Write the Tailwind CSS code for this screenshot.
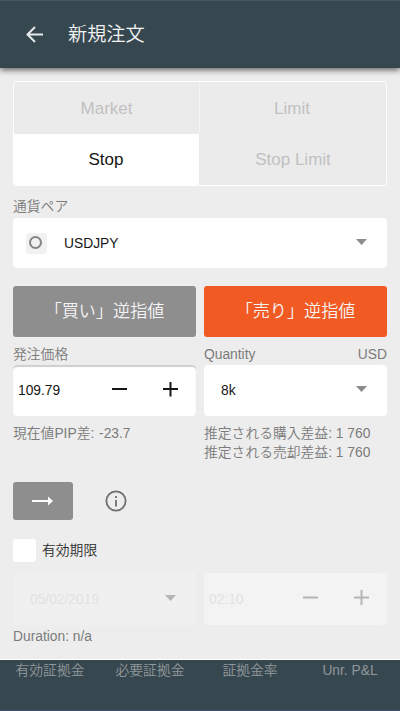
<!DOCTYPE html>
<html lang="ja">
<head>
<meta charset="utf-8">
<title>新規注文</title>
<script src="https://cdn.jsdelivr.net/npm/@tailwindcss/browser@4"></script>
</head>
<body class="w-[400px] h-[711px] overflow-hidden flex flex-col bg-[#ededed] text-[13.8px] leading-[19px] text-[#7b7b7b] font-['Liberation_Sans','Noto_Sans_CJK_JP',sans-serif]">
  <header class="h-[68px] shrink-0 flex items-center bg-[#37474f] border-t border-[#455660] shadow-[0_2px_6px_rgba(0,0,0,0.6)] pl-[26px] text-[#f2f4f5]">
    <svg class="w-[17px] h-[17px]" viewBox="0 0 17 17" fill="none" stroke="#e6e9ea" stroke-width="2"><path d="M17 8.5H1.5M9 1L1.5 8.5L9 16"/></svg>
    <h1 class="ml-[25px] text-[19.2px] leading-[28px] font-[350]">新規注文</h1>
  </header>

  <main class="flex-1 px-[13px] pt-[13px]">
    <div class="h-[105px] grid grid-cols-2 grid-rows-2 rounded-[4px] border border-white bg-[#ebebeb] text-[17px] text-[#c1c1c1] overflow-hidden">
      <div class="flex items-center justify-center pt-[2px] border-r border-[#f3f3f3]">Market</div>
      <div class="flex items-center justify-center pt-[2px] pr-[2px]">Limit</div>
      <div class="flex items-center justify-center bg-white text-[#161616] pr-px mr-px">Stop</div>
      <div class="flex items-center justify-center">Stop Limit</div>
    </div>

    <div class="mt-[10px] h-[22px] leading-[21px] font-[350]">通貨ペア</div>
    <div class="h-[50px] rounded-[4px] bg-white flex items-center pl-[13px] pr-[20px] text-[#161616]">
      <div class="size-[21px] rounded-[3px] bg-[#f0f1f1] flex items-center justify-center"><div class="relative -top-px -left-px size-[13px] rounded-full border-2 border-[#858585]"></div></div>
      <span class="ml-[17px] flex-1">USDJPY</span>
      <svg class="w-[11px] h-[6px] mb-[2px]" viewBox="0 0 11 6"><path d="M0 0H11L5.5 6Z" fill="#8c8c8c"/></svg>
    </div>

    <div class="mt-[18px] h-[51px] flex gap-[8px] text-[17.1px] text-[#f4f4f4] font-[350]">
      <div class="w-[183px] rounded-[3px] bg-[#8e8e8e] flex items-center justify-center">「買い」逆指値</div>
      <div class="w-[183px] rounded-[3px] bg-[#f15a22] flex items-center justify-center">「売り」逆指値</div>
    </div>

    <div class="mt-[7px] h-[21px] flex gap-[8px] leading-[21px]">
      <div class="w-[183px] font-[350]">発注価格</div>
      <div class="w-[183px] flex justify-between"><span>Quantity</span><span>USD</span></div>
    </div>
    <div class="h-[51px] flex gap-[8px] text-[#161616]">
      <div class="w-[183px] rounded-[4px] bg-white shadow-[inset_0_2px_1px_#cfcfcf] flex items-center pl-[5px] pr-[18px]">
        <span class="flex-1">109.79</span>
        <svg class="size-[15px] mb-[2px]" viewBox="0 0 15 15"><path d="M0 7H15" stroke="#161616" stroke-width="2"/></svg>
        <svg class="ml-[36px] mb-[2px] size-[15px]" viewBox="0 0 15 15"><path d="M0 7H15M7.5 -0.5V14.5" stroke="#161616" stroke-width="2"/></svg>
      </div>
      <div class="w-[183px] rounded-[4px] bg-white flex items-center pl-[17px] pr-[20px]">
        <span class="flex-1">8k</span>
        <svg class="w-[11px] h-[6px] mb-[3px]" viewBox="0 0 11 6"><path d="M0 0H11L5.5 6Z" fill="#8c8c8c"/></svg>
      </div>
    </div>

    <div class="mt-[8px] h-[38px] flex gap-[8px] font-[350]">
      <div class="w-[183px]">現在値PIP差: <span class="ml-px">-23.7</span></div>
      <div class="w-[183px] whitespace-nowrap">推定される購入差益: 1 760<br>推定される売却差益: 1 760</div>
    </div>

    <div class="mt-[20px] h-[38px] flex items-center">
      <div class="w-[60px] h-[38px] rounded-[3px] bg-[#8e8e8e] flex items-center justify-center">
        <svg class="w-[21px] h-[10px] mr-[2px] mb-px" viewBox="0 0 21 10"><path d="M0 5H17" stroke="#fff" stroke-width="2"/><path d="M16 0.5L21 5L16 9.5Z" fill="#fff"/></svg>
      </div>
      <svg class="ml-[32px] mb-px size-[22px]" viewBox="0 0 22 22" fill="none" stroke="#6e6e6e" stroke-width="1.8"><circle cx="11" cy="11" r="9.6"/><path d="M11 10V16.5M11 6V8"/></svg>
    </div>

    <div class="mt-[18px] h-[25px] flex items-center text-[#2b2b2b]">
      <div class="size-[23px] rounded-[3px] bg-white"></div>
      <span class="ml-[6px] mb-px font-[350]">有効期限</span>
    </div>

    <div class="mt-[10px] h-[52px] flex gap-[8px] text-[#e2e2e2]">
      <div class="w-[183px] rounded-[4px] bg-[#f0f0f0] flex items-center pl-[17px] pr-[20px]">
        <span class="flex-1">05/02/2019</span>
        <svg class="w-[11px] h-[6px] mb-[2px]" viewBox="0 0 11 6"><path d="M0 0H11L5.5 6Z" fill="#b5b5b5"/></svg>
      </div>
      <div class="w-[183px] rounded-[4px] bg-[#f3f3f3] flex items-center pl-[5px] pr-[18px]">
        <span class="flex-1">02:10</span>
        <svg class="size-[15px] mb-[3px]" viewBox="0 0 15 15"><path d="M0 7.5H15" stroke="#b5b5b5" stroke-width="2"/></svg>
        <svg class="ml-[36px] mb-[3px] size-[15px]" viewBox="0 0 15 15"><path d="M0 7.5H15M7.5 0V15" stroke="#b5b5b5" stroke-width="2"/></svg>
      </div>
    </div>
    <div class="mt-[2px] h-[20px] leading-[20px]">Duration: n/a</div>
  </main>

  <footer class="h-[52px] shrink-0 bg-[#37474f] border-t border-white border-b border-b-[#40506a] grid grid-cols-4 text-center text-[#90989b] leading-[22px] font-[350]">
    <span>有効証拠金</span><span>必要証拠金</span><span>証拠金率</span><span>Unr. P&amp;L</span>
  </footer>
</body>
</html>
